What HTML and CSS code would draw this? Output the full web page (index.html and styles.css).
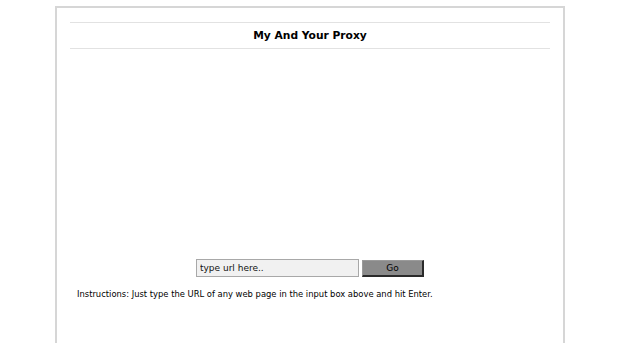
FILE: index.html
```html
<!DOCTYPE html>
<html>
<head>
<meta charset="utf-8">
<title>My And Your Proxy</title>
<link rel="stylesheet" href="styles.css">
</head>
<body>
<div class="page">
  <div class="header">
    <h1 class="title">My And Your Proxy</h1>
  </div>
  <div class="spacer"></div>
  <form class="urlform">
    <input class="url" type="text" value="type url here..">
    <button class="go" type="button">Go</button>
  </form>
  <p class="instructions">Instructions: Just type the URL of any web page in the input box above and hit Enter.</p>
</div>
</body>
</html>
```
FILE: styles.css
```css
html, body {
  margin: 0;
  padding: 0;
  background: #ffffff;
  height: 100%;
  overflow: hidden;
}
body {
  font-family: "DejaVu Sans", Verdana, sans-serif;
  color: #000;
}
.page {
  box-sizing: border-box;
  width: 510px;
  height: calc(100% - 6px);
  margin: 6px auto 0;
  border: 2px solid #d6d6d6;
  border-bottom: none;
  padding: 14px 13px 0;
}
.header {
  border-top: 1px solid #e2e2e2;
  border-bottom: 1px solid #e2e2e2;
  height: 25px;
  display: flex;
  align-items: center;
  justify-content: center;
}
.title {
  margin: 0;
  font-size: 10.7px;
  font-weight: bold;
}
.spacer {
  height: 210px;
}
.urlform {
  margin: 0;
  display: flex;
  justify-content: center;
  align-items: center;
  gap: 3px;
}
.url {
  box-sizing: border-box;
  width: 163px;
  height: 18px;
  margin: 0;
  padding: 0 3px;
  border: 1px solid #a8a8a8;
  background: #f1f1f1;
  font-family: "DejaVu Sans", Verdana, sans-serif;
  font-size: 9px;
  color: #111;
}
.go {
  box-sizing: border-box;
  width: 62px;
  height: 17px;
  margin: 1px 0 0;
  padding: 0;
  background: #8a8a8a;
  border: 1px solid #9a9a9a;
  border-right: 2px solid #2a2a2a;
  border-bottom: 2px solid #2a2a2a;
  font-family: "DejaVu Sans", Verdana, sans-serif;
  font-size: 9px;
  color: #000;
}
.instructions {
  margin: 12px 0 0 7px;
  font-size: 8.4px;
}
```
